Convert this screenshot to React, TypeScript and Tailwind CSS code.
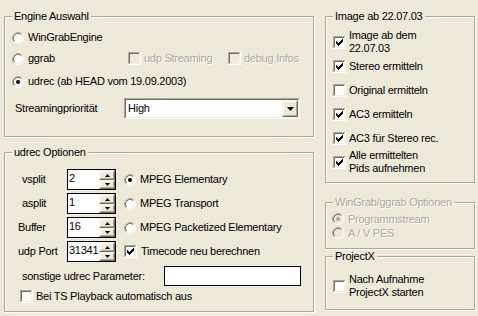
import type { ReactNode } from "react";

const etched = "text-[#aca899] [text-shadow:1px_1px_0_#fff]";

function Radio({ checked, disabled }: { checked?: boolean; disabled?: boolean }) {
  return (
    <svg width="12" height="12" viewBox="0 0 12 12" className="shrink-0">
      <circle cx="6" cy="6" r="5" fill={disabled ? "#ece9d8" : "#fff"} />
      <path d="M2.11 9.89 A5.5 5.5 0 0 1 9.89 2.11" fill="none" stroke="#aca899" />
      <path d="M9.89 2.11 A5.5 5.5 0 0 1 2.11 9.89" fill="none" stroke="#fff" />
      <path d="M2.82 9.18 A4.5 4.5 0 0 1 9.18 2.82" fill="none" stroke="#716f64" />
      <path d="M9.18 2.82 A4.5 4.5 0 0 1 2.82 9.18" fill="none" stroke="#f1efe2" />
      {checked && <circle cx="6" cy="6" r="2" fill={disabled ? "#aca899" : "#000"} />}
    </svg>
  );
}

function Check({ checked, disabled }: { checked?: boolean; disabled?: boolean }) {
  return (
    <svg width="13" height="13" viewBox="0 0 13 13" className="shrink-0" shapeRendering="crispEdges">
      <rect x="0" y="0" width="13" height="13" fill="#fff" />
      <rect x="0" y="0" width="12" height="12" fill="#aca899" />
      <rect x="1" y="1" width="11" height="11" fill="#f1efe2" />
      <rect x="1" y="1" width="10" height="10" fill="#716f64" />
      <rect x="2" y="2" width="9" height="9" fill={disabled ? "#ece9d8" : "#fff"} />
      {checked && (
        <path
          d="M3 5h1v3h-1z M4 6h1v3h-1z M5 7h1v3h-1z M6 6h1v3h-1z M7 5h1v3h-1z M8 4h1v3h-1z M9 3h1v3h-1z"
          fill="#000"
        />
      )}
    </svg>
  );
}

function Group({
  title,
  disabled,
  className,
  children,
}: {
  title: string;
  disabled?: boolean;
  className: string;
  children: ReactNode;
}) {
  return (
    <fieldset
      className={`border border-[#aca899] shadow-[inset_1px_1px_0_#fff,1px_1px_0_#fff] ${className}`}
    >
      <legend className={`ml-[7px] px-[2px] bg-[#ece9d8] leading-[13px] ${disabled ? etched : ""}`}>
        {title}
      </legend>
      {children}
    </fieldset>
  );
}

// raised 3d face used by the combo and spin buttons
function Raised({ className, children }: { className: string; children: ReactNode }) {
  return (
    <div
      className={`flex items-center justify-center bg-[#ece9d8] border border-t-[#f1efe2] border-l-[#f1efe2] border-r-[#716f64] border-b-[#716f64] ${className}`}
    >
      <div className="flex h-full w-full items-center justify-center border border-t-white border-l-white border-r-[#aca899] border-b-[#aca899]">
        {children}
      </div>
    </div>
  );
}

function Spin({ value }: { value: string }) {
  return (
    <div className="flex h-[21px] w-[49px] shrink-0 border border-black bg-white">
      <div className="flex-1 pl-[1px] leading-[16px]">{value}</div>
      <div className="flex w-[16px] flex-col">
        <Raised className="h-[10px]">
          <svg width="5" height="3" viewBox="0 0 5 3">
            <path d="M0 3h5l-2.5-3z" fill="#000" />
          </svg>
        </Raised>
        <Raised className="h-[9px]">
          <svg width="5" height="3" viewBox="0 0 5 3">
            <path d="M0 0h5l-2.5 3z" fill="#000" />
          </svg>
        </Raised>
      </div>
    </div>
  );
}

export default function App() {
  return (
    <div className="flex h-[316px] w-[478px] overflow-hidden bg-[#ece9d8] pl-[4px] pt-[10px] font-['Liberation_Sans',Arial,sans-serif] text-[11px] leading-[13px] tracking-[-0.25px] text-black">
      <div className="flex w-[310px] shrink-0 flex-col">
        <Group title="Engine Auswahl" className="h-[127px]">
          <div className="flex flex-col pl-[7px] pt-[4px]">
            <div className="flex h-[21px] items-center gap-[4px]">
              <Radio />
              <span>WinGrabEngine</span>
            </div>
            <div className="flex h-[21px] items-center">
              <div className="flex w-[116px] items-center gap-[4px]">
                <Radio />
                <span>ggrab</span>
              </div>
              <div className="flex w-[100px] items-center gap-[3px]">
                <Check disabled />
                <span className={etched}>udp Streaming</span>
              </div>
              <div className="flex items-center gap-[3px]">
                <Check disabled />
                <span className={etched}>debug Infos</span>
              </div>
            </div>
            <div className="mt-[2px] flex h-[21px] items-center gap-[4px]">
              <Radio checked />
              <span>udrec (ab HEAD vom 19.09.2003)</span>
            </div>
            <div className="mt-[6px] flex h-[21px] items-center">
              <span className="w-[112px] pl-[3px]">Streamingpriorität</span>
              <div className="h-[21px] w-[176px] border border-t-[#aca899] border-l-[#aca899] border-r-white border-b-white">
                <div className="flex h-full items-center border border-t-[#716f64] border-l-[#716f64] border-r-[#f1efe2] border-b-[#f1efe2] bg-white">
                  <span className="flex-1 pl-[2px]">High</span>
                  <Raised className="h-[17px] w-[16px]">
                    <svg width="7" height="4" viewBox="0 0 7 4">
                      <path d="M0 0h7l-3.5 4z" fill="#000" />
                    </svg>
                  </Raised>
                </div>
              </div>
            </div>
          </div>
        </Group>

        <Group title="udrec Optionen" className="mt-[9px] h-[166px]">
          <div className="flex flex-col pl-[13px] pt-[10px]">
            <div className="flex flex-col gap-[3px]">
              <div className="flex h-[21px] items-center">
                <span className="w-[49px] pl-[4px]">vsplit</span>
                <Spin value="2" />
                <div className="ml-[8px] flex items-center gap-[4px]">
                  <Radio checked />
                  <span>MPEG Elementary</span>
                </div>
              </div>
              <div className="flex h-[21px] items-center">
                <span className="w-[49px] pl-[4px]">asplit</span>
                <Spin value="1" />
                <div className="ml-[8px] flex items-center gap-[4px]">
                  <Radio />
                  <span>MPEG Transport</span>
                </div>
              </div>
              <div className="flex h-[21px] items-center">
                <span className="w-[49px]">Buffer</span>
                <Spin value="16" />
                <div className="ml-[8px] flex items-center gap-[4px]">
                  <Radio />
                  <span>MPEG Packetized Elementary</span>
                </div>
              </div>
              <div className="flex h-[21px] items-center">
                <span className="w-[49px]">udp Port</span>
                <Spin value="31341" />
                <div className="ml-[8px] flex items-center gap-[4px]">
                  <Check checked />
                  <span>Timecode neu berechnen</span>
                </div>
              </div>
            </div>
            <div className="mt-[4px] flex h-[20px] items-center">
              <span className="w-[146px] pl-[4px]">sonstige udrec Parameter:</span>
              <div className="h-[20px] w-[137px] border border-black bg-white" />
            </div>
            <div className="mt-[4px] flex h-[13px] items-center gap-[3px] pl-[2px]">
              <Check />
              <span>Bei TS Playback automatisch aus</span>
            </div>
          </div>
        </Group>
      </div>

      <div className="ml-[11px] flex w-[150px] shrink-0 flex-col">
        <Group title="Image ab 22.07.03" className="h-[173px]">
          <div className="flex flex-col pl-[7px] pt-[7px]">
            <div className="flex h-[24px] items-center gap-[3px]">
              <Check checked />
              <span>
                Image ab dem
                <br />
                22.07.03
              </span>
            </div>
            <div className="flex h-[24px] items-center gap-[3px]">
              <Check checked />
              <span>Stereo ermitteln</span>
            </div>
            <div className="flex h-[24px] items-center gap-[3px]">
              <Check />
              <span>Original ermitteln</span>
            </div>
            <div className="flex h-[24px] items-center gap-[3px]">
              <Check checked />
              <span>AC3 ermitteln</span>
            </div>
            <div className="flex h-[24px] items-center gap-[3px]">
              <Check checked />
              <span>AC3 für Stereo rec.</span>
            </div>
            <div className="flex h-[24px] items-center gap-[3px]">
              <Check checked />
              <span>
                Alle ermittelten
                <br />
                Pids aufnehmen
              </span>
            </div>
          </div>
        </Group>

        <Group title="WinGrab/ggrab Optionen" disabled className="mt-[13px] h-[53px]">
          <div className="flex flex-col pl-[6px] pt-[3px]">
            <div className="flex h-[14px] items-center gap-[4px]">
              <Radio checked disabled />
              <span className={etched}>Programmstream</span>
            </div>
            <div className="flex h-[14px] items-center gap-[4px]">
              <Radio disabled />
              <span className={etched}>A / V PES</span>
            </div>
          </div>
        </Group>

        <Group title="ProjectX" className="mt-[1px] h-[60px]">
          <div className="flex pl-[7px] pt-[10px]">
            <div className="flex h-[26px] items-center gap-[3px]">
              <Check />
              <span>
                Nach Aufnahme
                <br />
                ProjectX starten
              </span>
            </div>
          </div>
        </Group>
      </div>
    </div>
  );
}
